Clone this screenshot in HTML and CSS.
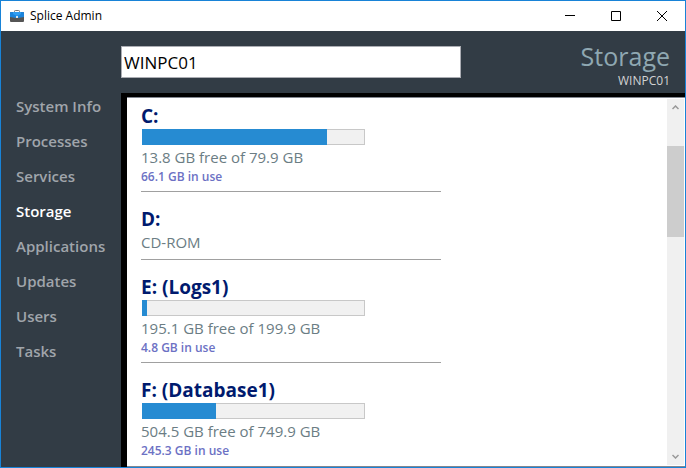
FILE: index.html
```html
<!DOCTYPE html>
<html lang="en">
<head>
<meta charset="utf-8">
<title>Splice Admin</title>
<link rel="stylesheet" href="styles.css">
</head>
<body>
<div class="window">
  <header class="titlebar">
    <svg class="app-icon" width="14" height="13" viewBox="0 0 14 13" aria-hidden="true">
      <path d="M4.5 3V1.3Q4.5.5 5.3.5h3.4q.8 0 .8.8V3" fill="none" stroke="#777"/>
      <rect y="2" width="14" height="10" rx="1" fill="#555"/>
      <path d="M0 3q0-1 1-1h12q1 0 1 1v4L8 8H6L0 7z" fill="#1b84dc"/>
      <path d="M3 2h8v2L7 6 3 4z" fill="#2f9cf0"/>
      <rect x="6" y="6" width="2" height="2" fill="#d5e3ee"/>
    </svg>
    <span class="app-name">Splice Admin</span>
    <button class="win-button" type="button" aria-label="Minimize"><svg width="10" height="10" viewBox="0 0 10 10"><path d="M0 4.500h10"/></svg></button>
    <button class="win-button" type="button" aria-label="Maximize"><svg width="10" height="10" viewBox="0 0 10 10"><path d="M.5.5h9v9h-9z"/></svg></button>
    <button class="win-button" type="button" aria-label="Close"><svg width="10" height="10" viewBox="0 0 10 10"><path d="M0 0l10 10M10 0L0 10"/></svg></button>
  </header>
  <div class="app">
    <nav class="sidebar">
      <a href="#system">System Info</a>
      <a href="#processes">Processes</a>
      <a href="#services">Services</a>
      <a href="#storage" class="active" aria-current="page">Storage</a>
      <a href="#applications">Applications</a>
      <a href="#updates">Updates</a>
      <a href="#users">Users</a>
      <a href="#tasks">Tasks</a>
    </nav>
    <div class="main">
      <div class="toolbar">
        <input class="target" type="text" value="WINPC01" aria-label="Computer name">
        <div class="heading">
          <h1>Storage</h1>
          <p>WINPC01</p>
        </div>
      </div>
      <div class="frame">
        <div class="panel">
          <main class="drives">
            <section class="drive">
              <h2>C:</h2>
              <div class="bar"><div class="fill" style="width:83%"></div></div>
              <p class="free">13.8 GB free of 79.9 GB</p>
              <p class="used">66.1 GB in use</p>
            </section>
            <section class="drive">
              <h2>D:</h2>
              <p class="media">CD-ROM</p>
            </section>
            <section class="drive">
              <h2>E: (Logs1)</h2>
              <div class="bar"><div class="fill" style="width:2.4%"></div></div>
              <p class="free">195.1 GB free of 199.9 GB</p>
              <p class="used">4.8 GB in use</p>
            </section>
            <section class="drive">
              <h2>F: (Database1)</h2>
              <div class="bar"><div class="fill" style="width:33%"></div></div>
              <p class="free">504.5 GB free of 749.9 GB</p>
              <p class="used">245.3 GB in use</p>
            </section>
          </main>
          <div class="scrollbar">
            <button type="button" aria-label="Scroll up"><svg width="7" height="5" viewBox="0 0 7 5"><path d="M.5 4l3-3 3 3"/></svg></button>
            <div class="track"><div class="thumb"></div></div>
            <button type="button" aria-label="Scroll down"><svg width="7" height="5" viewBox="0 0 7 5"><path d="M.5 1l3 3 3-3"/></svg></button>
          </div>
        </div>
      </div>
    </div>
  </div>
</div>
</body>
</html>
```
FILE: styles.css
```css
* { box-sizing: border-box; }

body {
  margin: 0;
  font-family: "Open Sans", "Noto Sans", sans-serif;
}

h1, h2, p { margin: 0; font-weight: 400; }

button { border: 0; padding: 0; background: none; }

.window {
  display: flex;
  flex-direction: column;
  height: 100vh;
  border: 1px solid #1883d7;
  background: #fff;
}

.titlebar {
  display: flex;
  align-items: center;
  flex: none;
  height: 30px;
  padding-left: 9px;
}

.app-name {
  flex: 1;
  margin-left: 6px;
  font-size: 12px;
  line-height: 16px;
  color: #000;
}

.win-button {
  display: flex;
  align-items: center;
  justify-content: center;
  width: 46px;
  height: 28px;
}

.win-button svg { fill: none; stroke: #000; }

.app {
  display: flex;
  flex: 1;
  min-height: 0;
  background: #323c45;
}

.sidebar {
  display: flex;
  flex-direction: column;
  flex: none;
  width: 120px;
  padding: 58px 0 0 15px;
}

.sidebar a {
  font-size: 15px;
  font-weight: 600;
  line-height: 35px;
  color: #a0a5ab;
  text-decoration: none;
}

.sidebar .active { color: #fff; }

.main {
  display: flex;
  flex: 1;
  flex-direction: column;
  min-width: 0;
}

.toolbar {
  display: flex;
  flex: none;
  align-items: center;
  justify-content: space-between;
  height: 62px;
  padding-right: 15px;
}

.target {
  width: 62%;
  height: 32px;
  padding: 0 2px;
  border: 1px solid #abadb3;
  background: #fff;
  color: #000;
  font: 17px "Open Sans", "Noto Sans", sans-serif;
}

.heading {
  padding-top: 4px;
  text-align: right;
}

.heading h1 {
  font-size: 25px;
  line-height: 34px;
  color: #8fa8b2;
}

.heading p {
  font-size: 12px;
  line-height: 16px;
  color: #d3d3d3;
}

.frame {
  flex: 1;
  min-height: 0;
  padding: 4px 0 0 6px;
  background: #000;
}

.panel {
  display: flex;
  height: 100%;
  padding: 1px 1px 1px 0;
  border-top: 1px solid #828790;
  border-bottom: 1px solid #828790;
  background: #fff;
}

.drives {
  flex: 1;
  padding: 4px 14px 0;
  overflow: hidden;
}

.drive {
  max-width: 300px;
  margin-bottom: 14px;
  padding-bottom: 6px;
  border-bottom: 1px solid #a0a0a0;
}

.drive h2 {
  font-size: 19px;
  font-weight: 700;
  line-height: 26px;
  color: #001a6e;
}

.bar {
  width: 223px;
  height: 16px;
  margin: 0 0 2px 1px;
  background: #f1f1f1;
  box-shadow: inset 0 0 0 1px #c8c8c8;
}

.fill {
  height: 16px;
  background: #268bd2;
}

.free, .media {
  font-size: 15px;
  line-height: 20px;
  color: #6b7d84;
}

.media { padding-bottom: 1px; }

.used {
  margin-top: 2px;
  font-size: 12px;
  font-weight: 600;
  line-height: 16px;
  color: #6c71c4;
}

.scrollbar {
  display: flex;
  flex: none;
  flex-direction: column;
  width: 17px;
  background: #f0f0f0;
}

.scrollbar button {
  display: flex;
  align-items: center;
  justify-content: center;
  height: 17px;
}

.scrollbar svg { fill: none; stroke: #999; stroke-width: 1.500; }

.track {
  flex: 1;
  padding-top: 30px;
}

.thumb {
  height: 91px;
  background: #cdcdcd;
}
```
